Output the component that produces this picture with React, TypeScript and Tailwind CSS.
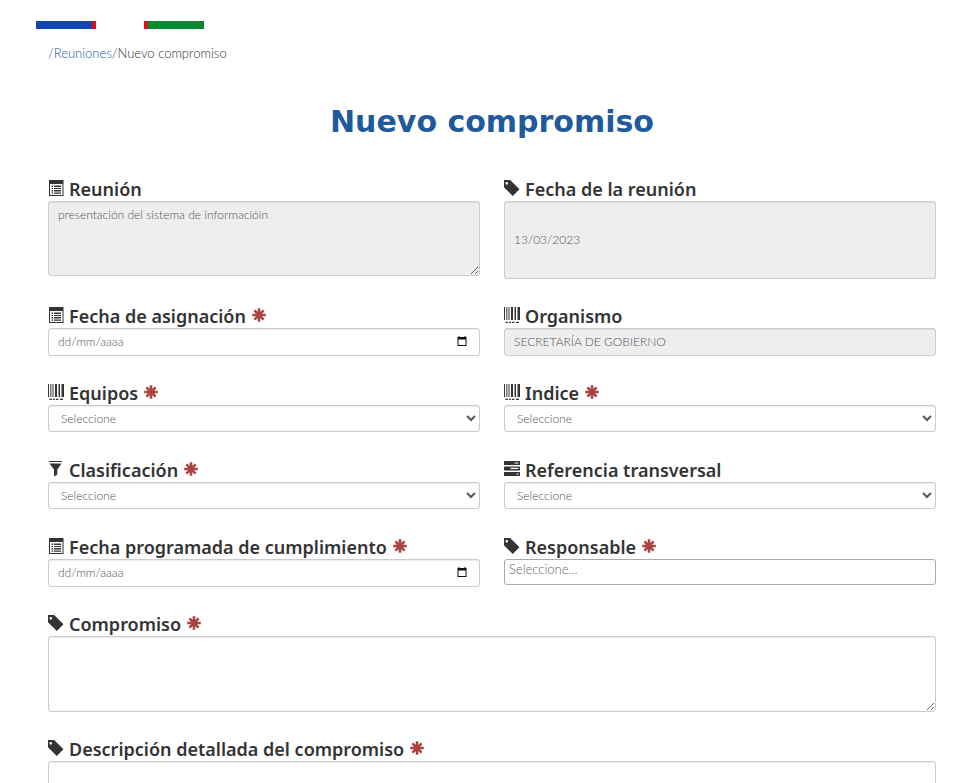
import type { ReactNode } from "react";

const control =
  "block w-full rounded-[3px] border border-[#ccc] px-[9px] text-[12px] text-[#555] shadow-[inset_0_1px_1px_rgba(0,0,0,0.075)] placeholder:text-[#555]";

function Icon({ children, viewBox = "0 0 16 16" }: { children: ReactNode; viewBox?: string }) {
  return (
    <svg viewBox={viewBox} className="mt-[3px] h-4 w-4 shrink-0 fill-[#333]" aria-hidden="true">
      {children}
    </svg>
  );
}

function TagIcon() {
  return (
    <Icon viewBox="40 0 1200 1200">
      <path
        transform="matrix(1 0 0 -1 0 1200)"
        d="M1 700v475q0 10 7.5 17.5t17.5 7.5h474l700 -700l-500 -500zM148 953q0 -42 29 -71q30 -30 71.5 -30t71.5 30q29 29 29 71t-29 71q-30 30 -71.5 30t-71.5 -30q-29 -29 -29 -71z"
      />
    </Icon>
  );
}

function ListIcon() {
  return (
    <Icon>
      <path
        fillRule="evenodd"
        d="M1 0h14.500v16H1zM2 4v11h12.500V4zM3.500 5.500H5V7H3.500zM6 5.500h7V7H6zM3.500 8H5v1H3.500zM6 8h7v1H6zM3.500 10H5v1.500H3.500zM6 10h7v1.500H6zM3.500 12.500H5v1.200H3.500zM6 12.500h7v1.200H6z"
      />
    </Icon>
  );
}

function BarcodeIcon() {
  return (
    <Icon>
      <path d="M0 0h1v13H0zM2.300 0h1v13h-1zM4.500 0h1v13h-1zM7 0h2v13H7zM10.500 0H12v13h-1.500zM13.500 0H16v13h-2.500zM1.500 14.800H4V16H1.500zM5 14.800h2V16H5zM8 14.800h2.500V16H8zM12 14.800h3V16h-3z" />
    </Icon>
  );
}

function FilterIcon() {
  return (
    <Icon>
      <path d="M1 0h13v1H1zM1.500 2.500h12L9.300 8.400v5.200L6 15.600V8.400z" />
    </Icon>
  );
}

function TasksIcon() {
  return (
    <Icon>
      <path
        fillRule="evenodd"
        d="M.6 0h14.800q.6 0 .6.6v2.800q0 .6-.6.6H.6Q0 4 0 3.400V.6Q0 0 .6 0zM10.500 1.400v1.200h4V1.400zM.6 5.400h14.800q.6 0 .6.6v2.800q0 .6-.6.6H.6q-.6 0-.6-.6V6q0-.6.6-.6zM6.500 6.800V8h8V6.800zM.6 11h14.800q.6 0 .6.6v2.800q0 .6-.6.6H.6q-.6 0-.6-.6v-2.800q0-.6.6-.6zM12.500 12.400v1.200h2v-1.200z"
      />
    </Icon>
  );
}

function Required() {
  return (
    <svg viewBox="0 0 14 14" className="ml-px mt-1 h-3.5 w-3.5 shrink-0" role="img" aria-label="obligatorio">
      <path
        d="M7 .2v13.600M.2 7h13.600M2.400 2.400l9.200 9.200M11.600 2.400l-9.200 9.200"
        stroke="#a94442"
        strokeWidth="2.600"
        fill="none"
      />
    </svg>
  );
}

interface FieldProps {
  id: string;
  label: string;
  icon: ReactNode;
  required?: boolean;
  wide?: boolean;
  children: ReactNode;
}

function Field({ id, label, icon, required, wide, children }: FieldProps) {
  return (
    <div className={wide ? "min-h-[52px] min-w-0 sm:col-span-2" : "min-h-[52px] min-w-0"}>
      <label
        htmlFor={id}
        className="flex h-6 items-start gap-[5px] font-['Noto_Sans','DejaVu_Sans',sans-serif] text-[18px] font-semibold leading-6 text-[#333]"
      >
        {icon}
        <span>{label}</span>
        {required && <Required />}
      </label>
      {children}
    </div>
  );
}

function DateField({ id }: { id: string }) {
  return (
    <div className="relative">
      <input id={id} type="text" placeholder="dd/mm/aaaa" className={`${control} h-7 bg-white pb-0.5`} />
      <button type="button" aria-label="Abrir calendario" className="absolute right-[13px] top-[8px]">
        <svg viewBox="0 0 10 10" className="h-2.5 w-2.5" aria-hidden="true">
          <path fillRule="evenodd" fill="#111" d="M1.500 0h1v1h5V0h1v1H9.500v9H.5V1h1zM1.500 3.500V9h7V3.500z" />
        </svg>
      </button>
    </div>
  );
}

function SelectField({ id }: { id: string }) {
  return (
    <select id={id} className={`${control} h-[27px] bg-white pl-2 pr-0.5`}>
      <option>Seleccione</option>
    </select>
  );
}

export default function App() {
  return (
    <div className="min-h-screen bg-white pb-12 pl-12 pr-[43px] pt-[21px] font-['Lato','Open_Sans',sans-serif] font-light">
      <div className="-ml-3 flex h-2 gap-12" aria-hidden="true">
        <div className="w-[60px] border-r-4 border-[#dc1019] bg-[#1047ae]" />
        <div className="w-[60px] border-l-4 border-[#dc1019] bg-[#088a30]" />
      </div>

      <nav className="mt-[14px] text-[13px] leading-5 text-[#333]">
        <a href="#reuniones" className="text-[#1f5a9c]">
          /Reuniones
        </a>
        <span>/Nuevo compromiso</span>
      </nav>

      <h1 className="mt-[39px] text-center font-['DejaVu_Sans',sans-serif] text-[30px] font-bold leading-10 text-[#1f5a9c]">
        Nuevo compromiso
      </h1>

      <form className="mt-[35px] grid grid-cols-1 gap-x-6 gap-y-[25px] sm:grid-cols-2">
        <Field id="reunion" label="Reunión" icon={<ListIcon />}>
          <textarea
            id="reunion"
            readOnly
            defaultValue="presentación del sistema de informacióin"
            className={`${control} h-[75px] bg-[#eee] py-1`}
          />
        </Field>
        <Field id="fecha-reunion" label="Fecha de la reunión" icon={<TagIcon />}>
          <input
            id="fecha-reunion"
            readOnly
            defaultValue="13/03/2023"
            className={`${control} h-[78px] bg-[#eee] pb-0.5`}
          />
        </Field>

        <Field id="fecha-asignacion" label="Fecha de asignación" icon={<ListIcon />} required>
          <DateField id="fecha-asignacion" />
        </Field>
        <Field id="organismo" label="Organismo" icon={<BarcodeIcon />}>
          <input
            id="organismo"
            readOnly
            defaultValue="SECRETARÍA DE GOBIERNO"
            className={`${control} h-7 bg-[#eee] pb-0.5`}
          />
        </Field>

        <Field id="equipos" label="Equipos" icon={<BarcodeIcon />} required>
          <SelectField id="equipos" />
        </Field>
        <Field id="indice" label="Indice" icon={<BarcodeIcon />} required>
          <SelectField id="indice" />
        </Field>

        <Field id="clasificacion" label="Clasificación" icon={<FilterIcon />} required>
          <SelectField id="clasificacion" />
        </Field>
        <Field id="referencia" label="Referencia transversal" icon={<TasksIcon />}>
          <SelectField id="referencia" />
        </Field>

        <Field id="fecha-cumplimiento" label="Fecha programada de cumplimiento" icon={<ListIcon />} required>
          <DateField id="fecha-cumplimiento" />
        </Field>
        <Field id="responsable" label="Responsable" icon={<TagIcon />} required>
          <input
            id="responsable"
            placeholder="Seleccione..."
            className="block h-[26px] w-full rounded-[3px] border border-[#aaa] bg-white px-1 pb-1.5 text-[13px] placeholder:text-[#666]"
          />
        </Field>

        <Field id="compromiso" label="Compromiso" icon={<TagIcon />} required wide>
          <textarea id="compromiso" className={`${control} h-[76px] bg-white py-1`} />
        </Field>
        <Field id="descripcion" label="Descripción detallada del compromiso" icon={<TagIcon />} required wide>
          <textarea id="descripcion" className={`${control} h-[76px] bg-white py-1`} />
        </Field>
      </form>
    </div>
  );
}
